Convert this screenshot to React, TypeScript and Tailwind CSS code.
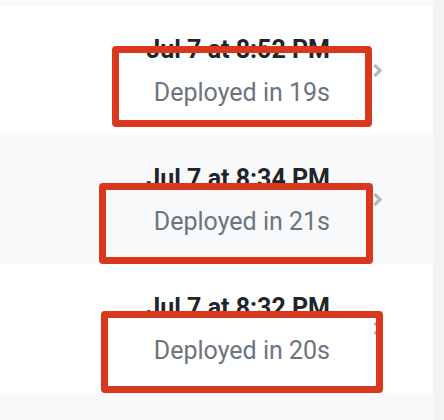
const deployments = [
  { date: "Jul 7 at 8:52 PM", took: "19s", bg: "bg-white" },
  { date: "Jul 7 at 8:34 PM", took: "21s", bg: "bg-[#f8f9fa]" },
  { date: "Jul 7 at 8:32 PM", took: "20s", bg: "bg-white" },
];

// annotation boxes drawn over the screenshot
const highlights = [
  "left-[112px] top-[46px] w-[260px] h-[81px]",
  "left-[99px] top-[183px] w-[274px] h-[81px]",
  "left-[101px] top-[311px] w-[282px] h-[82px]",
];

function Chevron() {
  return (
    <svg width="11" height="15" viewBox="0 0 11 15" className="text-[#b4b9be]">
      <path d="M2.5 2 L8 7.5 L2.5 13" fill="none" stroke="currentColor" strokeWidth="3.2" strokeLinejoin="miter" />
    </svg>
  );
}

export default function App() {
  return (
    <div className="relative flex h-[420px] w-[444px] overflow-hidden bg-[#f8f9fa] font-['Roboto',sans-serif]">
      <div className="flex w-[433px] flex-col pt-[6px]">
        {deployments.map((d) => (
          <div key={d.date} className={`flex h-[129px] items-center justify-end pr-[50px] ${d.bg}`}>
            <div className="pt-[1px] text-right">
              <div className="text-[25px] font-bold leading-[30px] text-[#212529]">{d.date}</div>
              <div className="mt-[13px] text-[25px] leading-[30px] text-[#6c757d]">Deployed in {d.took}</div>
            </div>
            <div className="ml-[42px]">
              <Chevron />
            </div>
          </div>
        ))}
      </div>
      <div className="w-[11px] bg-[#f1f3f5]" />

      {highlights.map((h) => (
        <div key={h} className={`absolute rounded-[4px] border-[7px] border-[#d9381e] ${h}`} />
      ))}
    </div>
  );
}
